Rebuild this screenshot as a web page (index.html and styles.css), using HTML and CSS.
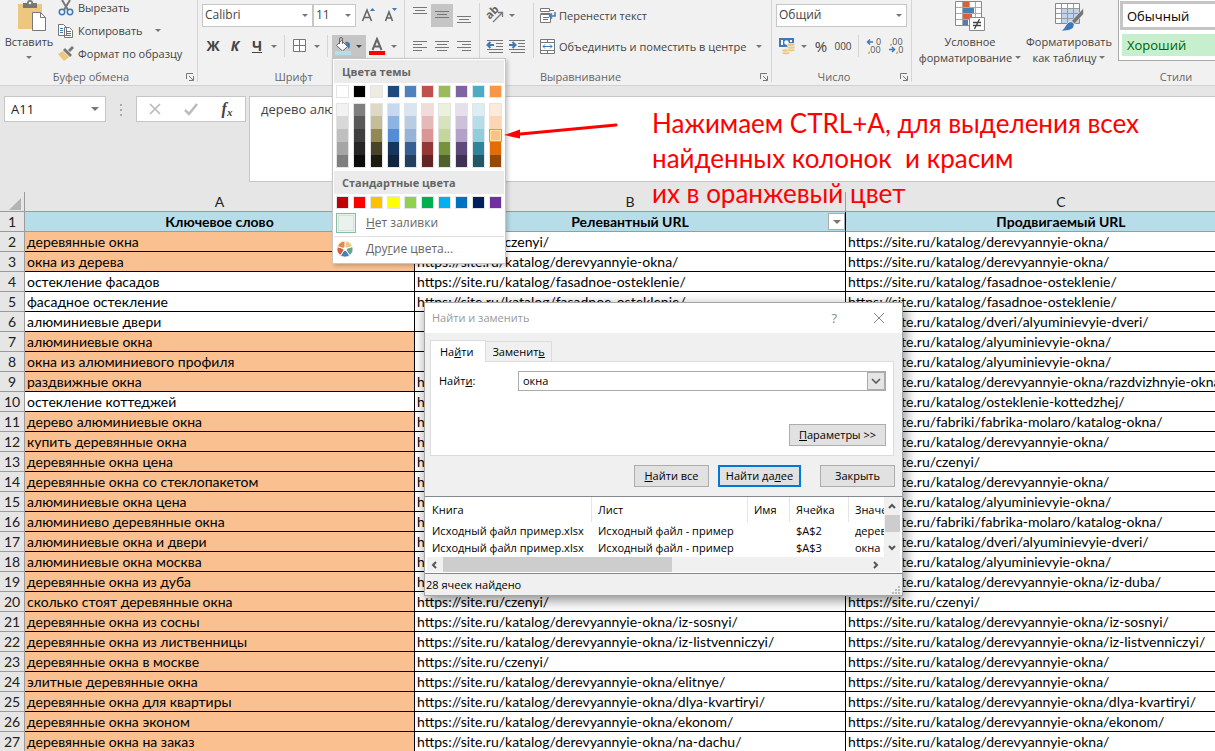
FILE: index.html
```html
<!DOCTYPE html>
<html lang="ru">
<head>
<meta charset="utf-8">
<title>Исходный файл пример.xlsx</title>
<link rel="stylesheet" href="styles.css">
</head>
<body>
<div class="app">
<header class="ribbon">
  <section class="group clipboard">
    <div class="group-body">
      <button class="big paste">
        <svg width="30" height="32" viewBox="0 0 30 32"><path fill="#edc77d" d="M1 4h24v25H1z"/><path fill="#777" d="M6 3h4a3 3 0 0 1 6 0h4v5H6z"/><circle cx="13" cy="3" r="1.3" fill="#f1f1f1"/><path fill="#fff" stroke="#777" d="M15.500 12.500h8l5 5v13h-13z"/><path fill="none" stroke="#777" d="M23.500 12.500v5h5"/></svg>
        <span>Вставить</span><i class="caret"></i>
      </button>
      <div class="stack">
        <button class="item"><svg width="16" height="18" viewBox="0 0 16 18"><path stroke="#777" stroke-width="2" d="M4 1l6 10M12 1L6 11"/><circle cx="4" cy="13" r="2.700" fill="none" stroke="#3f78b5" stroke-width="1.500"/><circle cx="12" cy="13" r="2.700" fill="none" stroke="#3f78b5" stroke-width="1.500"/></svg>Вырезать</button>
        <button class="item"><svg width="16" height="16" viewBox="0 0 16 16"><path fill="#fff" stroke="#777" d="M.5 1.500h5l3 3v8h-8zM6.500 4.500h5l3 3v7h-8z"/><path stroke="#3f78b5" d="M2 5.500h3M2 7.500h3M2 9.500h3M8 8.500h5M8 10.500h5M8 12.500h5"/></svg>Копировать<i class="caret wide"></i></button>
        <button class="item"><svg width="16" height="16" viewBox="0 0 16 16"><path fill="#edc77d" d="M0 8l5-3 6 6-5 4z"/><path fill="#777" d="M5 4l2-2 7 7-2 2zM10 4l4-4 2 2-4 4z"/></svg>Формат по образцу</button>
      </div>
    </div>
    <footer class="group-foot"><span>Буфер обмена</span><button class="launch" aria-label="Буфер обмена: параметры"><svg width="8" height="8" viewBox="0 0 8 8"><path fill="none" stroke="#777" d="M.5 6V.5H7M3 3l4 4M7.500 3v4.500H3"/></svg></button></footer>
  </section>

  <section class="group font">
    <div class="group-body column">
      <div class="tools">
        <button class="combo font-name">Calibri<i class="caret"></i></button>
        <button class="combo font-size">11<i class="caret"></i></button>
        <button class="tool grow" aria-label="Увеличить размер"><svg width="16" height="18" viewBox="0 0 16 18"><path fill="none" stroke="#666" stroke-width="1.600" d="M1.500 15L6 4l4.500 11M3 11.500h6"/><path fill="#3f78b5" d="M9 5l2.500-3L14 5z"/></svg></button>
        <button class="tool" aria-label="Уменьшить размер"><svg width="16" height="18" viewBox="0 0 16 18"><path fill="none" stroke="#666" stroke-width="1.600" d="M2.500 15L6 6l3.500 9M3.500 12h5"/><path fill="#3f78b5" d="M9 2h5l-2.500 3z"/></svg></button>
      </div>
      <div class="tools">
        <button class="tool letter"><b>Ж</b></button>
        <button class="tool letter"><b><em>К</em></b></button>
        <button class="tool letter"><b><u>Ч</u></b></button>
        <button class="arrow" aria-label="Подчеркивание"><i class="caret"></i></button>
        <span class="rule"></span>
        <button class="tool" aria-label="Границы"><svg width="14" height="14" viewBox="0 0 14 14"><path fill="#fff" stroke="#777" d="M.5.5h12v12H.5zM6.500.5v12M.5 6.500h12"/></svg></button>
        <button class="arrow" aria-label="Виды границ"><i class="caret"></i></button>
        <span class="rule"></span>
        <div class="fill-picker">
          <button class="fill-button" aria-label="Цвет заливки"><svg width="18" height="18" viewBox="0 0 18 18"><path fill="#fff" stroke="#666" d="M2.500 8.500l5-5 6 6-5 4.500z"/><path fill="none" stroke="#666" d="M5.500 7V2a1.500 1.500 0 0 1 3 0v5"/><path fill="#3f78b5" d="M11 5c5-1 6 3 4 7l-2-3z"/><path fill="#b7dde8" d="M1 14h16v4H1z"/></svg><i class="caret dark"></i></button>
          <div class="palette">
            <h3>Цвета темы</h3>
            <div class="swatches">
              <button style="background:#ffffff"></button><button style="background:#000000"></button><button style="background:#eeece1"></button><button style="background:#1f497d"></button><button style="background:#4f81bd"></button><button style="background:#c0504d"></button><button style="background:#9bbb59"></button><button style="background:#8064a2"></button><button style="background:#4bacc6"></button><button style="background:#f79646"></button>
            </div>
            <div class="shades">
              <div><button style="background:#f2f2f2"></button><button style="background:#d8d8d8"></button><button style="background:#bfbfbf"></button><button style="background:#a5a5a5"></button><button style="background:#7f7f7f"></button></div>
              <div><button style="background:#7f7f7f"></button><button style="background:#595959"></button><button style="background:#3f3f3f"></button><button style="background:#262626"></button><button style="background:#0c0c0c"></button></div>
              <div><button style="background:#ddd9c3"></button><button style="background:#c4bd97"></button><button style="background:#938953"></button><button style="background:#494429"></button><button style="background:#1d1b10"></button></div>
              <div><button style="background:#c6d9f0"></button><button style="background:#8db3e2"></button><button style="background:#548dd4"></button><button style="background:#17365d"></button><button style="background:#0f243e"></button></div>
              <div><button style="background:#dbe5f1"></button><button style="background:#b8cce4"></button><button style="background:#95b3d7"></button><button style="background:#366092"></button><button style="background:#244061"></button></div>
              <div><button style="background:#f2dcdb"></button><button style="background:#e5b9b7"></button><button style="background:#d99694"></button><button style="background:#953734"></button><button style="background:#632423"></button></div>
              <div><button style="background:#ebf1dd"></button><button style="background:#d7e3bc"></button><button style="background:#c3d69b"></button><button style="background:#76923c"></button><button style="background:#4f6128"></button></div>
              <div><button style="background:#e5e0ec"></button><button style="background:#ccc1d9"></button><button style="background:#b2a2c7"></button><button style="background:#5f497a"></button><button style="background:#3f3151"></button></div>
              <div><button style="background:#dbeef3"></button><button style="background:#b7dde8"></button><button style="background:#92cddc"></button><button style="background:#31859b"></button><button style="background:#205867"></button></div>
              <div><button style="background:#fdeada"></button><button style="background:#fbd5b5"></button><button class="picked" style="background:#fac08f"></button><button style="background:#e36c09"></button><button style="background:#974806"></button></div>
            </div>
            <h3>Стандартные цвета</h3>
            <div class="swatches">
              <button style="background:#c00000"></button><button style="background:#ff0000"></button><button style="background:#ffc000"></button><button style="background:#ffff00"></button><button style="background:#92d050"></button><button style="background:#00b050"></button><button style="background:#00b0f0"></button><button style="background:#0070c0"></button><button style="background:#002060"></button><button style="background:#7030a0"></button>
            </div>
            <button class="palette-item"><span class="no-fill"></span><span><u>Н</u>ет заливки</span></button>
            <button class="palette-item more"><svg width="18" height="18" viewBox="-9 -9 18 18"><g stroke="#fff" stroke-width="1"><path fill="#edc77d" d="M0 0V-8A8 8 0 0 1 7.600-2.500z"/><path fill="#6aa28f" d="M0 0L7.600-2.500A8 8 0 0 1 4.700 6.500z"/><path fill="#4a7fb5" d="M0 0L4.700 6.500A8 8 0 0 1-4.700 6.500z"/><path fill="#d0603f" d="M0 0L-4.700 6.500A8 8 0 0 1-7.600-2.500z"/><path fill="#e08a4b" d="M0 0L-7.600-2.500A8 8 0 0 1 0-8z"/></g><circle r="2" fill="#fff"/></svg><span>Дру<u>г</u>ие цвета...</span></button>
          </div>
        </div>
        <button class="tool" aria-label="Цвет текста"><svg width="18" height="18" viewBox="0 0 18 18"><path fill="none" stroke="#666" stroke-width="2" d="M4.500 13L9 2l4.500 11M6 9.500h6"/><path fill="red" d="M1 14h16v4H1z"/></svg></button>
        <button class="arrow" aria-label="Выбор цвета текста"><i class="caret"></i></button>
      </div>
    </div>
    <footer class="group-foot"><span>Шрифт</span><span class="launch"></span></footer>
  </section>

  <section class="group alignment">
    <div class="group-body">
      <div class="align-pad">
        <div class="tools">
          <button class="tool" aria-label="По верхнему краю"><svg width="16" height="16" viewBox="0 0 16 16"><path stroke="#777" d="M1 .5h14M3 3.500h10M1 6.500h14"/></svg></button>
          <button class="tool on" aria-label="По середине"><svg width="16" height="16" viewBox="0 0 16 16"><path stroke="#777" d="M1 4.500h14M3 7.500h10M1 10.500h14"/></svg></button>
          <button class="tool" aria-label="По нижнему краю"><svg width="16" height="16" viewBox="0 0 16 16"><path stroke="#777" d="M1 9.500h14M3 12.500h10M1 15.500h14"/></svg></button>
        </div>
        <div class="tools">
          <button class="tool" aria-label="По левому краю"><svg width="16" height="12" viewBox="0 0 16 12"><path stroke="#777" d="M1 1.500h14M1 4.500h9M1 7.500h14M1 10.500h9"/></svg></button>
          <button class="tool" aria-label="По центру"><svg width="16" height="12" viewBox="0 0 16 12"><path stroke="#777" d="M1 1.500h14M3 4.500h10M1 7.500h14M3 10.500h10"/></svg></button>
          <button class="tool" aria-label="По правому краю"><svg width="16" height="12" viewBox="0 0 16 12"><path stroke="#777" d="M1 1.500h14M6 4.500h9M1 7.500h14M6 10.500h9"/></svg></button>
        </div>
      </div>
      <div class="align-pad indent">
        <div class="tools">
          <button class="tool" aria-label="Ориентация"><svg width="18" height="18" viewBox="0 0 18 18"><g transform="rotate(-45 8 8)"><text x="1" y="9" font-size="11" font-weight="700" fill="#666">ab</text></g><path fill="none" stroke="#777" stroke-width="1.300" d="M7 16l9-9M12 6.500h4.500V11"/></svg></button>
          <button class="arrow" aria-label="Виды ориентации"><i class="caret"></i></button>
        </div>
        <div class="tools">
          <button class="tool" aria-label="Уменьшить отступ"><svg width="18" height="14" viewBox="0 0 18 14"><path stroke="#777" d="M1 1.500h16M10 4.500h7M10 7.500h7M1 10.500h16M3 13.500h14"/><path stroke="#3f78b5" stroke-width="2" fill="none" d="M8 6H2M4.500 3L1.500 6l3 3"/></svg></button>
          <button class="tool" aria-label="Увеличить отступ"><svg width="18" height="14" viewBox="0 0 18 14"><path stroke="#777" d="M1 1.500h16M10 4.500h7M10 7.500h7M1 10.500h16M3 13.500h14"/><path stroke="#3f78b5" stroke-width="2" fill="none" d="M1 6h6M4.500 3l3 3-3 3"/></svg></button>
        </div>
      </div>
      <div class="align-pad">
        <button class="item tall"><svg width="17" height="16" viewBox="0 0 17 16"><path fill="#fff" stroke="#777" d="M.5.5h9v3H.5zM.5 6.500h10v8H.5z"/><path stroke="#777" d="M9 2.500h5M.5 5.500h10"/><path stroke="#3f78b5" d="M3 9.500h6M3 11.500h5"/><path fill="none" stroke="#3f78b5" stroke-width="1.500" d="M15 4v4H9.500M12 5.500L9.500 8l2.500 2.500"/></svg>Перенести текст</button>
        <button class="item tall"><svg width="17" height="16" viewBox="0 0 17 16"><path fill="#fff" stroke="#777" d="M.5.5h14v14H.5z"/><path stroke="#777" d="M.5 3.500h14M.5 11.500h14M7.500.5v3M7.500 11.500v3"/><path fill="none" stroke="#3f78b5" d="M3 7.500h9M5 5.500l-2 2 2 2M10 5.500l2 2-2 2"/></svg>Объединить и поместить в центре<i class="caret wide"></i></button>
      </div>
    </div>
    <footer class="group-foot"><span>Выравнивание</span><button class="launch" aria-label="Выравнивание: параметры"><svg width="8" height="8" viewBox="0 0 8 8"><path fill="none" stroke="#777" d="M.5 6V.5H7M3 3l4 4M7.500 3v4.500H3"/></svg></button></footer>
  </section>

  <section class="group number">
    <div class="group-body column">
      <div class="tools"><button class="combo number-format">Общий<i class="caret"></i></button></div>
      <div class="tools">
        <button class="tool money" aria-label="Финансовый формат"><svg width="18" height="18" viewBox="0 0 18 18"><path fill="#3f78b5" d="M1 1h15v9H1z"/><path fill="#fff" d="M3 3h2v5H3zM12 3h2v2h-2z"/><circle cx="8.500" cy="5.500" r="2.200" fill="#fff"/><g fill="#edc77d" stroke="#f1f1f1" stroke-width=".7"><ellipse cx="8" cy="16" rx="4" ry="1.700"/><ellipse cx="8" cy="13.500" rx="4" ry="1.700"/><ellipse cx="13" cy="13" rx="4" ry="1.700"/><ellipse cx="13" cy="10.500" rx="4" ry="1.700"/><ellipse cx="13" cy="8" rx="4" ry="1.700"/></g></svg></button>
        <button class="arrow" aria-label="Виды формата"><i class="caret"></i></button>
        <button class="tool percent">%</button>
        <button class="tool thousands">000</button>
        <span class="rule"></span>
        <button class="tool" aria-label="Увеличить разрядность"><svg width="16" height="16" viewBox="0 0 16 16"><g font-size="9" fill="#555"><text x="10" y="7">0</text><text x="2" y="15">,00</text></g><path fill="none" stroke="#3f78b5" stroke-width="1.500" d="M7 4H2M4 1.500L1.500 4 4 6.500"/></svg></button>
        <button class="tool" aria-label="Уменьшить разрядность"><svg width="16" height="16" viewBox="0 0 16 16"><g font-size="9" fill="#555"><text x="2" y="7">,00</text><text x="8" y="15">,0</text></g><path fill="none" stroke="#3f78b5" stroke-width="1.500" d="M1 11.500h5M4 9l2.500 2.500L4 14"/></svg></button>
      </div>
    </div>
    <footer class="group-foot"><span>Число</span><button class="launch" aria-label="Число: параметры"><svg width="8" height="8" viewBox="0 0 8 8"><path fill="none" stroke="#777" d="M.5 6V.5H7M3 3l4 4M7.500 3v4.500H3"/></svg></button></footer>
  </section>

  <section class="group styles">
    <div class="group-body">
      <button class="big conditional">
        <svg width="30" height="32" viewBox="0 0 30 32"><path fill="#fff" stroke="#888" d="M.5 1.500h26v24H.5z"/><path stroke="#aaa" d="M7.500 2v23M14.500 2v23M20.500 2v23M1 7.500h25M1 13.500h25M1 19.500h25"/><path fill="#d8613c" d="M8 2h6v5H8zM8 14h9v5H8z"/><path fill="#4a7fb5" d="M8 8h11v5H8zM8 20h5v5H8z"/><path fill="#fff" stroke="#888" d="M14.500 17.500h15v13h-15z"/><path stroke="#444" stroke-width="1.300" d="M18 22.500h8M18 25.500h8M24.500 19l-5 10"/></svg>
        <span>Условное<br>форматирование<i class="caret"></i></span>
      </button>
      <button class="big format-table">
        <svg width="30" height="32" viewBox="0 0 30 32"><path fill="#fff" stroke="#888" d="M1.500 3.500h24v20h-24z"/><path fill="#bfd3ea" d="M8 9h17v14H8z"/><path stroke="#999" d="M7.500 4v19M13.500 4v19M19.500 4v19M2 8.500h23M2 13.500h23M2 18.500h23"/><path fill="#777" stroke="#f1f1f1" stroke-width=".6" d="M29.500 8v6l-9 10-3-3z"/><path fill="#3f78b5" stroke="#f1f1f1" stroke-width=".8" d="M15 22c3-1 6 1 5 4-1 4-6 5-13 5 4-2 4-7 8-9z"/></svg>
        <span>Форматировать<br>как таблицу<i class="caret"></i></span>
      </button>
      <div class="gallery"><button class="style-normal">Обычный</button><button class="style-good">Хороший</button></div>
    </div>
    <footer class="group-foot"><span>Стили</span><span class="launch"></span></footer>
  </section>
</header>

<div class="formula-bar">
  <button class="name-box">A11<i class="caret big-caret"></i></button>
  <svg class="grip" width="3" height="12" viewBox="0 0 3 12"><path fill="#aaa" d="M0 0h2v2H0zM0 5h2v2H0zM0 10h2v2H0z"/></svg>
  <div class="formula-buttons">
    <button aria-label="Отмена"><svg width="14" height="14" viewBox="0 0 14 14"><path stroke="#bbb" stroke-width="1.700" d="M2 2l10 10M12 2L2 12"/></svg></button>
    <button aria-label="Ввод"><svg width="14" height="14" viewBox="0 0 14 14"><path fill="none" stroke="#bbb" stroke-width="2.500" d="M1 8l4 4 8-10"/></svg></button>
    <button class="fx" aria-label="Вставить функцию">f<small>x</small></button>
  </div>
  <textarea class="formula" aria-label="Строка формул">дерево алюминиевые окна</textarea>
</div>

<main class="sheet">
<table class="grid">
<colgroup><col class="col-n"><col class="col-a"><col class="col-b"><col class="col-b"></colgroup>
<thead><tr><th class="corner"><svg width="12" height="12" viewBox="0 0 12 12"><path fill="#b4b4b4" d="M12 0v12H0z"/></svg></th><th>A</th><th>B</th><th>C</th></tr></thead>
<tbody>
<tr class="titles"><th>1</th><td>Ключевое слово</td><td><div class="title-cell">Релевантный URL<button class="filter" aria-label="Фильтр"><i class="caret big-caret"></i></button></div></td><td>Продвигаемый URL</td></tr>
<tr><th>2</th><td class="hit">деревянные окна</td><td>https://site.ru/czenyi/</td><td>https://site.ru/katalog/derevyannyie-okna/</td></tr>
<tr><th>3</th><td class="hit">окна из дерева</td><td>https://site.ru/katalog/derevyannyie-okna/</td><td>https://site.ru/katalog/derevyannyie-okna/</td></tr>
<tr><th>4</th><td>остекление фасадов</td><td>https://site.ru/katalog/fasadnoe-osteklenie/</td><td>https://site.ru/katalog/fasadnoe-osteklenie/</td></tr>
<tr><th>5</th><td>фасадное остекление</td><td>https://site.ru/katalog/fasadnoe-osteklenie/</td><td>https://site.ru/katalog/fasadnoe-osteklenie/</td></tr>
<tr><th>6</th><td>алюминиевые двери</td><td></td><td>https://site.ru/katalog/dveri/alyuminievyie-dveri/</td></tr>
<tr><th>7</th><td class="hit">алюминиевые окна</td><td></td><td>https://site.ru/katalog/alyuminievyie-okna/</td></tr>
<tr><th>8</th><td class="hit">окна из алюминиевого профиля</td><td></td><td>https://site.ru/katalog/alyuminievyie-okna/</td></tr>
<tr><th>9</th><td class="hit">раздвижные окна</td><td>https://site.ru/czenyi/</td><td>https://site.ru/katalog/derevyannyie-okna/razdvizhnyie-okna/</td></tr>
<tr><th>10</th><td>остекление коттеджей</td><td>https://site.ru/czenyi/</td><td>https://site.ru/katalog/osteklenie-kottedzhej/</td></tr>
<tr><th>11</th><td class="hit">дерево алюминиевые окна</td><td>https://site.ru/czenyi/</td><td>https://site.ru/fabriki/fabrika-molaro/katalog-okna/</td></tr>
<tr><th>12</th><td class="hit">купить деревянные окна</td><td>https://site.ru/czenyi/</td><td>https://site.ru/katalog/derevyannyie-okna/</td></tr>
<tr><th>13</th><td class="hit">деревянные окна цена</td><td>https://site.ru/czenyi/</td><td>https://site.ru/czenyi/</td></tr>
<tr><th>14</th><td class="hit">деревянные окна со стеклопакетом</td><td>https://site.ru/czenyi/</td><td>https://site.ru/katalog/derevyannyie-okna/</td></tr>
<tr><th>15</th><td class="hit">алюминиевые окна цена</td><td>https://site.ru/czenyi/</td><td>https://site.ru/katalog/alyuminievyie-okna/</td></tr>
<tr><th>16</th><td class="hit">алюминиево деревянные окна</td><td>https://site.ru/czenyi/</td><td>https://site.ru/fabriki/fabrika-molaro/katalog-okna/</td></tr>
<tr><th>17</th><td class="hit">алюминиевые окна и двери</td><td>https://site.ru/czenyi/</td><td>https://site.ru/katalog/dveri/alyuminievyie-dveri/</td></tr>
<tr><th>18</th><td class="hit">алюминиевые окна москва</td><td>https://site.ru/czenyi/</td><td>https://site.ru/katalog/alyuminievyie-okna/</td></tr>
<tr><th>19</th><td class="hit">деревянные окна из дуба</td><td>https://site.ru/czenyi/</td><td>https://site.ru/katalog/derevyannyie-okna/iz-duba/</td></tr>
<tr><th>20</th><td class="hit">сколько стоят деревянные окна</td><td>https://site.ru/czenyi/</td><td>https://site.ru/czenyi/</td></tr>
<tr><th>21</th><td class="hit">деревянные окна из сосны</td><td>https://site.ru/katalog/derevyannyie-okna/iz-sosnyi/</td><td>https://site.ru/katalog/derevyannyie-okna/iz-sosnyi/</td></tr>
<tr><th>22</th><td class="hit">деревянные окна из лиственницы</td><td>https://site.ru/katalog/derevyannyie-okna/iz-listvenniczyi/</td><td>https://site.ru/katalog/derevyannyie-okna/iz-listvenniczyi/</td></tr>
<tr><th>23</th><td class="hit">деревянные окна в москве</td><td>https://site.ru/czenyi/</td><td>https://site.ru/katalog/derevyannyie-okna/</td></tr>
<tr><th>24</th><td class="hit">элитные деревянные окна</td><td>https://site.ru/katalog/derevyannyie-okna/elitnye/</td><td>https://site.ru/katalog/derevyannyie-okna/</td></tr>
<tr><th>25</th><td class="hit">деревянные окна для квартиры</td><td>https://site.ru/katalog/derevyannyie-okna/dlya-kvartiryi/</td><td>https://site.ru/katalog/derevyannyie-okna/dlya-kvartiryi/</td></tr>
<tr><th>26</th><td class="hit">деревянные окна эконом</td><td>https://site.ru/katalog/derevyannyie-okna/ekonom/</td><td>https://site.ru/katalog/derevyannyie-okna/ekonom/</td></tr>
<tr><th>27</th><td class="hit">деревянные окна на заказ</td><td>https://site.ru/katalog/derevyannyie-okna/na-dachu/</td><td>https://site.ru/katalog/derevyannyie-okna/</td></tr>
</tbody>
</table>
</main>

<svg class="pointer" width="116" height="20" viewBox="0 0 116 20"><path stroke="red" stroke-width="3" d="M12 12.500L113 3" stroke-linecap="round"/><path fill="red" d="M1 13L17 7.500v9z"/></svg>
<p class="note">Нажимаем CTRL+A, для выделения всех<br>найденных колонок&nbsp; и красим<br>их в оранжевый цвет</p>

<section class="dialog" role="dialog" aria-label="Найти и заменить">
  <header class="dialog-title"><span>Найти и заменить</span><button class="help" aria-label="Справка">?</button><button aria-label="Закрыть окно"><svg width="12" height="12" viewBox="0 0 12 12"><path stroke="#888" d="M1 1l10 10M11 1L1 11"/></svg></button></header>
  <div class="tabs"><button class="tab active">На<u>й</u>ти</button><button class="tab">Заменит<u>ь</u></button></div>
  <div class="panel">
    <div class="field"><label for="find">Найт<u>и</u>:</label><div class="find-box"><input id="find" value="окна"><button aria-label="История поиска"><svg width="10" height="6" viewBox="0 0 10 6"><path fill="none" stroke="#555" stroke-width="1.500" d="M1 1l4 4 4-4"/></svg></button></div></div>
    <button class="push options"><span><u>П</u>араметры &gt;&gt;</span></button>
  </div>
  <div class="actions"><button class="push find-all"><span><u>Н</u>айти все</span></button><button class="push primary"><span>Найти да<u>л</u>ее</span></button><button class="push close">Закрыть</button></div>
  <div class="results">
    <div class="results-top">
      <div class="results-clip">
      <table>
        <colgroup><col class="r-book"><col class="r-sheet"><col class="r-name"><col class="r-cell"><col class="r-value"></colgroup>
        <thead><tr><th>Книга</th><th>Лист</th><th>Имя</th><th>Ячейка</th><th>Значение</th></tr></thead>
        <tbody><tr><td>Исходный файл пример.xlsx</td><td>Исходный файл - пример</td><td></td><td>$A$2</td><td>деревянные</td></tr>
        <tr><td>Исходный файл пример.xlsx</td><td>Исходный файл - пример</td><td></td><td>$A$3</td><td>окна из</td></tr></tbody>
      </table>
      </div>
      <div class="vscroll"><svg width="8" height="6" viewBox="0 0 8 6"><path fill="none" stroke="#555" stroke-width="2" d="M1 5l3-3 3 3"/></svg><span class="thumb"></span><svg width="8" height="6" viewBox="0 0 8 6"><path fill="none" stroke="#555" stroke-width="2" d="M1 1l3 3 3-3"/></svg></div>
    </div>
    <div class="hscroll"><svg width="6" height="8" viewBox="0 0 6 8"><path fill="none" stroke="#555" stroke-width="2" d="M5 1L2 4l3 3"/></svg><span class="thumb"></span><svg width="6" height="8" viewBox="0 0 6 8"><path fill="none" stroke="#555" stroke-width="2" d="M1 1l3 3-3 3"/></svg></div>
  </div>
  <footer class="status"><span>28 ячеек найдено</span><svg width="9" height="9" viewBox="0 0 9 9"><path fill="#bbb" d="M6 0h2v2H6zM3 3h2v2H3zM6 3h2v2H6zM0 6h2v2H0zM3 6h2v2H3zM6 6h2v2H6z"/></svg></footer>
</section>
</div>
</body>
</html>
```
FILE: styles.css
```css
:root {
  --ui: "Open Sans", "Noto Sans", sans-serif;
  --cell: Lato, "Open Sans", sans-serif;
}
* { box-sizing: border-box; }
body { margin: 0; overflow: hidden; background: #e6e6e6; font: 11px/16px var(--ui); color: #444; }
button { margin: 0; padding: 0; border: 0; background: none; font: inherit; color: inherit; text-align: left; }
svg { display: block; flex: none; }
.app { position: relative; height: 100vh; display: flex; flex-direction: column; overflow: hidden; }

.caret { display: inline-block; flex: none; width: 0; height: 0; border: 3px solid transparent; border-top-color: #777; border-bottom: 0; }
.caret.dark { border-top-color: #444; }

/* Ribbon */
.ribbon { display: flex; flex: none; height: 86px; background: #f1f1f1; border-bottom: 1px solid #d2d2d2; white-space: nowrap; }
.group { display: flex; flex-direction: column; flex: none; height: 82px; border-right: 1px solid #d5d5d5; }
.group-body { display: flex; height: 72px; }
.group-body.column { flex-direction: column; }
.group-foot { display: flex; align-items: center; height: 10px; color: #666; }
.group-foot > span:first-child { flex: 1; text-align: center; }
.launch { display: flex; flex: none; justify-content: flex-end; width: 12px; margin-right: 3px; }
.clipboard { width: 198px; }
.font { width: 207px; }
.alignment { width: 367px; }
.number { width: 140px; }
.ribbon .styles { flex: 1; min-width: 0; border-right: 0; }
.styles .group-foot { padding-left: 240px; }
.big { display: flex; flex: none; flex-direction: column; align-items: center; text-align: center; }
.big svg { margin-bottom: 2px; }
.paste { width: 58px; }
.paste svg { margin-left: 6px; }
.paste .caret { margin-top: 6px; }
.stack { display: flex; flex-direction: column; margin-top: -4px; }
.item { display: flex; align-items: center; gap: 2px; height: 23px; }
.stack .item { gap: 4px; }
.caret.wide { margin-left: 8px; }
.tools { display: flex; align-items: center; height: 24px; margin-top: 3px; }
.tools + .tools { margin-top: 7px; }
.combo { display: flex; align-items: center; justify-content: space-between; height: 23px; padding: 0 4px 0 2px; background: #fff; border: 1px solid #c6c6c6; font-size: 12px; }
.font-name { width: 111px; margin-left: 4px; }
.font-size { width: 43px; }
.number-format { flex: 1; margin: 0 4px; }
.tool { display: flex; align-items: center; justify-content: center; flex: none; width: 22px; height: 23px; }
.tool.on { background: #c5c5c5; }
.grow { margin-left: 2px; }
.arrow { display: flex; align-items: center; justify-content: center; flex: none; width: 12px; height: 23px; }
.letter { font-size: 14px; }
.letter:first-child { margin-left: 4px; }
.rule { flex: none; width: 1px; height: 22px; margin: 0 4px; background: #d5d5d5; }
.align-pad { flex: none; }
.alignment .align-pad:first-child { padding-left: 4px; }
.align-pad.indent { height: 55px; margin: 3px 6px 0 4px; padding: 0 5px 0 4px; border: 1px solid #d5d5d5; border-width: 0 1px; }
.indent .tools:first-child { margin-top: 0; }
.item.tall { height: 31px; }
.thousands { font-size: 10px; }
.percent { font-size: 15px; }
.money { margin-left: 4px; }

.conditional { width: 100px; margin-left: 8px; }
.format-table { width: 98px; }
.big span .caret { margin: 0 0 3px 3px; }
.gallery { flex: 1; min-width: 0; height: 61px; display: flex; flex-direction: column; gap: 4px; background: #fff; border: 1px solid #ababab; border-width: 0 0 1px 1px; padding: 1px 0 4px 1px; }
.gallery button { font-size: 13px; }
.style-normal { height: 29px; padding-left: 5px; border: 3px solid #c5c5c5; border-right: 0; color: #000; }
.gallery .style-normal { padding-left: 4px; }
.style-good { height: 22px; margin-left: 2px; padding-left: 5px; background: #c6efce; color: #006100; }

/* Fill colour palette */
.fill-picker { position: relative; flex: none; }
.fill-button { display: flex; align-items: center; gap: 4px; width: 34px; height: 23px; padding-left: 2px; background: #c5c5c5; }
.palette { position: absolute; z-index: 5; top: 100%; left: 0; width: 174px; padding: 1px; background: #fff; border: 1px solid #c6c6c6; box-shadow: 2px 2px 4px #0003; color: #666; }
.palette h3 { margin: 0; height: 23px; padding-left: 8px; background: #ebebeb; font-size: 11px; line-height: 23px; font-weight: 700; color: #666; }
.swatches, .shades { display: flex; gap: 4px; padding: 2px; }
.swatches button { width: 13px; height: 13px; border: 1px solid #e2e4e7; }
.shades { padding: 3px 2px; }
.shades div { display: flex; flex-direction: column; border: 1px solid #e2e4e7; }
.shades button { width: 11px; height: 13px; }
.shades button:first-child, .shades button:last-child { height: 12px; }
.shades .picked { width: 13px; margin: 0 -1px; border: 1px solid #f29436; outline: 1px solid #ffe294; outline-offset: -2px; }
.palette-item { display: flex; align-items: center; gap: 10px; width: 100%; height: 25px; padding-left: 2px; font-size: 12px; }
.no-fill { width: 20px; height: 20px; border: 1px solid #86bfa0; background: #e9f2ee; box-shadow: inset 0 0 0 1px #e9f2ee, inset 0 0 0 2px #d5e0da; }
.palette-item.more { gap: 12px; height: 26px; border-top: 1px solid #e1e1e1; }

/* Formula bar */
.formula-bar { display: flex; flex: none; align-items: flex-start; padding: 10px 0 10px 4px; height: 106px; }
.name-box { display: flex; align-items: center; justify-content: space-between; width: 102px; height: 26px; padding: 0 6px; background: #fff; border: 1px solid #c6c6c6; font-size: 13px; color: #222; }
.caret.big-caret { border-width: 4px 4px 0; }
.grip { margin: 8px 13px 0 14px; }
.formula-buttons { display: flex; width: 110px; height: 26px; background: #fff; border: 1px solid #c6c6c6; }
.formula-buttons button { display: flex; flex: 1; align-items: center; justify-content: center; }
.formula-buttons .fx { font: italic 700 16px/20px "Liberation Serif", serif; }
.fx small { font-size: 11px; padding-top: 5px; }
.formula { flex: 1; height: 86px; margin-left: 3px; padding: 3px 11px; background: #fff; border: 1px solid #c6c6c6; border-right: 0; resize: none; font: 13px/18px var(--ui); color: #444; }

/* Sheet */
.sheet { flex: 1; min-height: 0; overflow: hidden; background: #fff; }
.grid { width: 1277px; table-layout: fixed; border-collapse: separate; border-spacing: 0; font: 14px/19px var(--cell); color: #000; }
.col-n { width: 25px; }
.col-a { width: 390px; }
.col-b { width: 431px; }
.grid th, .grid td { height: 20px; padding: 0; overflow: hidden; white-space: nowrap; }
.grid th { background: #e6e6e6; border: 1px solid #9b9b9b; border-width: 0 1px 1px 0; font-weight: 400; color: #222; }
.grid td { padding-left: 2px; border: 1px solid #000; border-width: 0 1px 1px 0; }
.grid .hit { background: #fac08f; }
.grid .corner svg { margin: 4px 0 0 9px; }
.grid .titles td { padding: 0; background: #b7dde8; border-bottom-color: #9b9b9b; font-weight: 700; text-align: center; }
.title-cell { display: flex; align-items: center; justify-content: center; position: relative; height: 19px; }
.filter { position: absolute; right: 0; top: 1px; display: flex; align-items: center; justify-content: center; width: 17px; height: 17px; background: #fff; border: 1px solid #ababab; }

/* Annotation */
.pointer { position: absolute; z-index: 6; left: 503px; top: 122px; }
.note { position: absolute; left: 652px; top: 106px; margin: 0; font: 26px/35px var(--cell); color: red; white-space: nowrap; }

/* Find dialog */
.dialog { position: absolute; z-index: 4; left: 424px; top: 302px; width: 479px; background: #f0f0f0; border: 1px solid #a5a5a5; box-shadow: 2px 4px 12px #0007; color: #000; }
.dialog-title { display: flex; align-items: center; height: 30px; padding: 0 17px 0 7px; background: #fff; color: #999; }
.dialog-title span { flex: 1; }
.help { margin-right: 36px; font-size: 13px; color: #888; }
.tabs { display: flex; align-items: flex-end; height: 28px; padding-left: 5px; }
.tab { height: 20px; padding: 0 6px; border: 1px solid #dcdcdc; border-left: 0; border-bottom: 0; }
.tab.active { z-index: 1; height: 22px; margin-bottom: -1px; padding: 0 12px 0 9px; border-left: 1px solid #dcdcdc; background: #fff; }
.panel { display: flex; flex-direction: column; justify-content: space-between; height: 95px; margin: 0 8px 0 5px; padding: 9px 7px 9px 8px; background: #fff; border: 1px solid #dcdcdc; }
.field { display: flex; align-items: center; }
.field label { width: 79px; }
.find-box { display: flex; flex: 1; height: 20px; border: 1px solid #ababab; }
.find-box input { flex: 1; min-width: 0; padding: 0 4px; border: 0; background: #fff; font: inherit; color: #000; }
.find-box button { display: flex; align-items: center; justify-content: center; width: 18px; background: #e5e5e5; border: 1px solid #ababab; }
.push { display: flex; align-items: center; justify-content: center; height: 22px; background: #e1e1e1; border: 1px solid #adadad; }
.options { width: 97px; align-self: flex-end; }
.actions { display: flex; justify-content: flex-end; padding: 9px 7px 9px 0; }
.find-all { width: 75px; margin-right: 9px; }
.primary { width: 83px; margin-right: 19px; border: 2px solid #0078d7; }
.close { width: 75px; }
.results { height: 78px; padding: 0 2px 1px; background: #fff; border: 1px solid #828790; border-width: 1px 0; }
.results-top { display: flex; height: 60px; }
.results-clip { flex: 1; min-width: 0; overflow: hidden; }
.results table { width: 480px; table-layout: fixed; border-spacing: 0; }
.results th, .results td { padding: 0 0 0 6px; height: 17px; line-height: 17px; font-weight: 400; text-align: left; white-space: nowrap; overflow: hidden; }
.results th { height: 25px; border-right: 1px solid #e5e5e5; }
.results th:first-child, .results td:first-child { padding-left: 5px; }
.r-book { width: 165px; }
.r-sheet { width: 156px; }
.r-name { width: 42px; }
.r-cell { width: 59px; }
.vscroll { display: flex; flex-direction: column; align-items: center; justify-content: space-between; width: 16px; padding: 6px 0; background: #f0f0f0; }
.vscroll .thumb { width: 15px; height: 17px; margin-bottom: 8px; background: #cdcdcd; }
.hscroll { display: flex; align-items: center; height: 15px; padding: 0 21px 0 4px; background: #f0f0f0; }
.hscroll .thumb { width: 229px; height: 15px; margin: 0 auto 0 6px; background: #cdcdcd; }
.status { display: flex; align-items: center; justify-content: space-between; height: 21px; padding: 0 1px; }
.status svg { align-self: flex-end; }
```
